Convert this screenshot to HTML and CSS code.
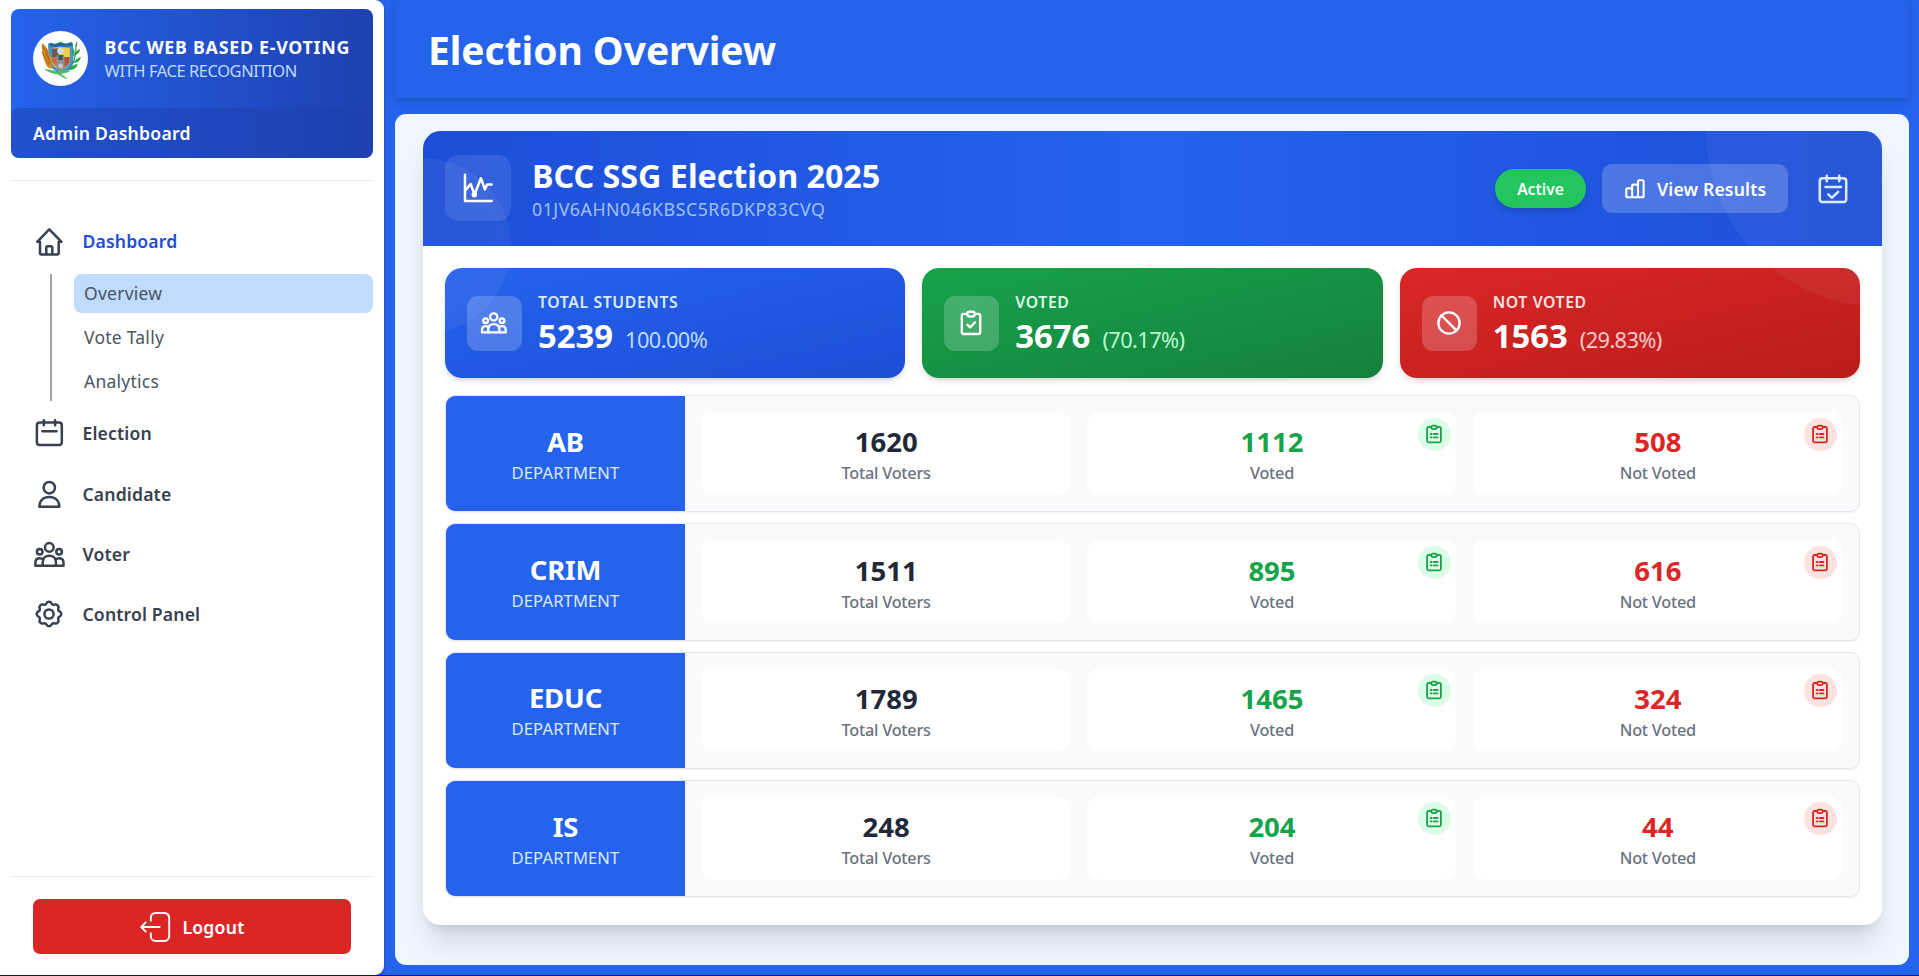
FILE: index.html
```html
<!DOCTYPE html>
<html lang="en">
<head>
<meta charset="utf-8">
<title>Election Overview</title>
<link rel="stylesheet" href="styles.css">
</head>
<body>
<svg class="sprite" aria-hidden="true">
  <symbol id="i-home" viewBox="0 0 32 32"><path d="M7 16.8H4.2L16.3 4.4 28.5 16.8h-2.8V28a1.4 1.4 0 0 1-1.4 1.4H8.4A1.4 1.4 0 0 1 7 28z"/><path d="M13.3 29v-6.3a1.5 1.5 0 0 1 1.5-1.5h3a1.5 1.5 0 0 1 1.5 1.5V29"/></symbol>
  <symbol id="i-calendar" viewBox="0 0 32 32"><rect x="3.9" y="5.6" width="24.9" height="22.4" rx="2.8"/><path d="M10.8 3.2v5M22.1 3.2v5M9.4 14.2h14.2"/></symbol>
  <symbol id="i-user" viewBox="0 0 32 32"><circle cx="16.3" cy="9.7" r="5.7"/><path d="M6.4 28.7C6.4 22.4 10.6 18.9 16.3 18.9s10 3.5 10 9.8z"/></symbol>
  <symbol id="i-users" viewBox="0 0 32 32"><circle cx="16.3" cy="9.4" r="4.3"/><circle cx="6.7" cy="13.8" r="2.8"/><circle cx="26.1" cy="13.8" r="2.8"/><path d="M9.7 27.8V24.5c0-4.4 2.8-6.7 6.6-6.7s6.7 2.3 6.7 6.7v3.3z"/><path d="M9.7 27.8H2.4v-2.9c0-3 1.6-4.6 4.3-4.6 1.5 0 2.7.5 3.5 1.5M23 27.8h7.5v-2.9c0-3-1.7-4.6-4.4-4.6-1.5 0-2.7.5-3.5 1.5"/></symbol>
  <symbol id="i-gear" viewBox="0 0 32 32"><circle cx="16" cy="16" r="4.6"/><path d="M13.36 5.42A2.9 2.9 0 0 1 18.64 5.42A2.2 2.2 0 0 0 21.61 6.66A2.9 2.9 0 0 1 25.34 10.39A2.2 2.2 0 0 0 26.58 13.36A2.9 2.9 0 0 1 26.58 18.64A2.2 2.2 0 0 0 25.34 21.61A2.9 2.9 0 0 1 21.61 25.34A2.2 2.2 0 0 0 18.64 26.58A2.9 2.9 0 0 1 13.36 26.58A2.2 2.2 0 0 0 10.39 25.34A2.9 2.9 0 0 1 6.66 21.61A2.2 2.2 0 0 0 5.42 18.64A2.9 2.9 0 0 1 5.42 13.36A2.2 2.2 0 0 0 6.66 10.39A2.9 2.9 0 0 1 10.39 6.66A2.2 2.2 0 0 0 13.36 5.42z"/></symbol>
  <symbol id="i-logout" viewBox="0 0 32 32"><path d="M11.8 9.8V7.5C11.8 3 13.5 2 17 2h8c3.5 0 5.2 1.5 5.2 5.5v17c0 4-1.7 5.5-5.2 5.5h-8c-3.5 0-5.2-1-5.2-5.5v-2.3M20.6 16H2.2M6.8 11.4L2.2 16l4.6 4.6"/></symbol>
  <symbol id="i-chart" viewBox="0 0 32 32"><path d="M3 2.8v26.2h26.600M3.600 18.200l5-6.200 4 10.500 6.300-16.300 4 11.200 2.200-4.900h4.500"/><circle cx="12.300" cy="22.800" r="1.500"/></symbol>
  <symbol id="i-bars" viewBox="0 0 24 24"><path d="M8.900 21H3.700a1.200 1.200 0 0 1-1.200-1.200v-7.300a1.200 1.200 0 0 1 1.200-1.200h5.200zM15.300 21H8.900V8.500a1.300 1.300 0 0 1 1.300-1.300h5.100zM15.300 21V3.800a1.300 1.300 0 0 1 1.300-1.300h3.500a1.300 1.300 0 0 1 1.300 1.300v16a1.200 1.200 0 0 1-1.200 1.200z"/></symbol>
  <symbol id="i-calcheck" viewBox="0 0 32 32"><rect x="2.800" y="5.200" width="26.400" height="23.800" rx="2.800"/><path d="M9.800 2.800v5.400M22.200 2.800v5.400M8.500 14h15.500M11.300 21.400l3.600 3.400 6.200-6"/></symbol>
  <symbol id="i-clipcheck" viewBox="0 0 24 24"><rect x="8.600" y="1.600" width="6.800" height="4.400" rx="2"/><path d="M8.600 3.600H5.200A1.700 1.700 0 0 0 3.500 5.300v15.200a1.700 1.700 0 0 0 1.700 1.700h13.600a1.700 1.700 0 0 0 1.700-1.700V5.300a1.700 1.700 0 0 0-1.700-1.700h-3.400M8.700 13.600l2.500 2.500 4.500-4.800"/></symbol>
  <symbol id="i-ban" viewBox="0 0 24 24"><circle cx="12" cy="12" r="9.800"/><path d="M5 5l14 14"/></symbol>
  <symbol id="i-cliplist" viewBox="0 0 20 20"><rect x="7.200" y="1.700" width="5.600" height="3.500" rx="1.700"/><path d="M7.200 3H4.600A1.500 1.500 0 0 0 3.100 4.500v12.300a1.500 1.500 0 0 0 1.500 1.500h10.800a1.500 1.500 0 0 0 1.500-1.500V4.500A1.500 1.500 0 0 0 15.400 3h-2.600M6.600 10h1M9.800 10h3.700M6.600 13.400h1M9.800 13.400h3.700"/></symbol>
</svg>

<div class="app">
  <aside class="sidebar">
    <div class="brand">
      <div class="brand-top">
        <svg class="logo" viewBox="0 0 55 55">
          <circle cx="27.500" cy="27.500" r="27.500" fill="#fff"/>
          <path d="M15 12q6 3 12.500-1Q34 15 40 11.500l.5 18Q39 39 27.500 43 17 39 15.500 29z" fill="#3f9ad0"/>
          <path d="M17 11.500q5 2.500 10.500-.5 5.500 3 11-.2l1 3.600q-6 2.600-12 .6-6 2-11 0z" fill="#236b99"/>
          <path d="M19 17q8-2 17.500 0l.5 13q-1.500 6-9.500 9.500-8-3.500-9-9.500z" fill="#e8c54b"/>
          <path d="M18.800 17.500h7v9h-7z" fill="#675b66"/><path d="M29 17.500h7.500v9H29z" fill="#f0ce45"/><path d="M18.800 26.500h7.500V37q-6-3-7.300-7z" fill="#d8643d"/><path d="M28.500 26h8v5q-2 4-8 7z" fill="#b45235"/>
          <circle cx="27.500" cy="20" r="3.200" fill="#d7dde1"/><path d="M24 24h7l1 10-2.500 7h-4L23 34z" fill="#8c8e92"/><path d="M25.500 24h4v5h-4z" fill="#315b4c"/><circle cx="27.500" cy="35" r="2.400" fill="#c7c9cb"/>
          <path d="M9 12q8 5 10.500 25-4 2-6.500-3.500Q8 23 9 12z" fill="#d68b25"/><path d="M9.500 15l7 15M9 21l7 13M13 17l4 15" stroke="#a9651b" fill="none"/>
          <path d="M44 10q-2 3-1.500 6Q45 14 44 10zm3 8q-4 1-5 6 5-1 5-6zm1 8q-5 1-7.500 6 6 0 7.500-6zm-3 7q-6 0-9 6 7 0 9-6zm-5-16q-2 5 1 9 2-5-1-9z" fill="#2eaa45"/><path d="M43 14q1 17-9 27" stroke="#187c38" fill="none"/>
          <path d="M11 38q7 0 13 3 7-3 14-1-5 2-10 3l7 5-3-.5-7-4q-8-1-14-5.500z" fill="#4fbd5d"/>
        </svg>
        <div class="brand-text">
          <div class="brand-name">BCC WEB BASED E-VOTING</div>
          <div class="brand-sub">WITH FACE RECOGNITION</div>
        </div>
      </div>
      <div class="brand-role"><span>Admin Dashboard</span></div>
    </div>
    <div class="rule"></div>
    <nav class="nav">
      <a class="nav-item active"><svg class="nav-icon"><use href="#i-home"/></svg><span>Dashboard</span></a>
      <div class="subnav">
        <a class="sub selected"><span>Overview</span></a>
        <a class="sub"><span>Vote Tally</span></a>
        <a class="sub"><span>Analytics</span></a>
      </div>
      <a class="nav-item"><svg class="nav-icon"><use href="#i-calendar"/></svg><span>Election</span></a>
      <a class="nav-item"><svg class="nav-icon"><use href="#i-user"/></svg><span>Candidate</span></a>
      <a class="nav-item"><svg class="nav-icon"><use href="#i-users"/></svg><span>Voter</span></a>
      <a class="nav-item"><svg class="nav-icon"><use href="#i-gear"/></svg><span>Control Panel</span></a>
    </nav>
    <div class="side-foot">
      <button class="logout"><svg class="logout-icon"><use href="#i-logout"/></svg><span>Logout</span></button>
    </div>
  </aside>

  <main class="main">
    <header class="page-head"><h1>Election Overview</h1></header>
    <section class="content">
      <article class="card">
        <div class="orb orb-right"></div>
        <div class="orb orb-left"></div>
        <div class="card-head">
          <div class="head-icon"><svg><use href="#i-chart"/></svg></div>
          <div class="head-text">
            <h2>BCC SSG Election 2025</h2>
            <p>01JV6AHN046KBSC5R6DKP83CVQ</p>
          </div>
          <span class="pill"><span>Active</span></span>
          <button class="view"><svg><use href="#i-bars"/></svg><span>View Results</span></button>
          <svg class="cal"><use href="#i-calcheck"/></svg>
        </div>
        <div class="card-body">
          <div class="stats">
            <div class="stat blue"><div class="stat-icon"><svg class="people"><use href="#i-users"/></svg></div><div class="stat-text"><div class="stat-label">TOTAL STUDENTS</div><div class="stat-line"><b>5239</b><span>100.00%</span></div></div></div>
            <div class="stat green"><div class="stat-icon"><svg><use href="#i-clipcheck"/></svg></div><div class="stat-text"><div class="stat-label">VOTED</div><div class="stat-line"><b>3676</b><span>(70.17%)</span></div></div></div>
            <div class="stat red"><div class="stat-icon"><svg><use href="#i-ban"/></svg></div><div class="stat-text"><div class="stat-label">NOT VOTED</div><div class="stat-line"><b>1563</b><span>(29.83%)</span></div></div></div>
          </div>
          <div class="rows">
            <div class="row">
              <div class="dept"><b>AB</b><span>DEPARTMENT</span></div>
              <div class="cells">
                <div class="cell"><b>1620</b><span>Total Voters</span></div>
                <div class="cell voted"><b>1112</b><span>Voted</span><i class="badge"><svg><use href="#i-cliplist"/></svg></i></div>
                <div class="cell missed"><b>508</b><span>Not Voted</span><i class="badge"><svg><use href="#i-cliplist"/></svg></i></div>
              </div>
            </div>
            <div class="row">
              <div class="dept"><b>CRIM</b><span>DEPARTMENT</span></div>
              <div class="cells">
                <div class="cell"><b>1511</b><span>Total Voters</span></div>
                <div class="cell voted"><b>895</b><span>Voted</span><i class="badge"><svg><use href="#i-cliplist"/></svg></i></div>
                <div class="cell missed"><b>616</b><span>Not Voted</span><i class="badge"><svg><use href="#i-cliplist"/></svg></i></div>
              </div>
            </div>
            <div class="row">
              <div class="dept"><b>EDUC</b><span>DEPARTMENT</span></div>
              <div class="cells">
                <div class="cell"><b>1789</b><span>Total Voters</span></div>
                <div class="cell voted"><b>1465</b><span>Voted</span><i class="badge"><svg><use href="#i-cliplist"/></svg></i></div>
                <div class="cell missed"><b>324</b><span>Not Voted</span><i class="badge"><svg><use href="#i-cliplist"/></svg></i></div>
              </div>
            </div>
            <div class="row">
              <div class="dept"><b>IS</b><span>DEPARTMENT</span></div>
              <div class="cells">
                <div class="cell"><b>248</b><span>Total Voters</span></div>
                <div class="cell voted"><b>204</b><span>Voted</span><i class="badge"><svg><use href="#i-cliplist"/></svg></i></div>
                <div class="cell missed"><b>44</b><span>Not Voted</span><i class="badge"><svg><use href="#i-cliplist"/></svg></i></div>
              </div>
            </div>
          </div>
        </div>
      </article>
    </section>
  </main>
</div>
</body>
</html>
```
FILE: styles.css
```css
* { box-sizing: border-box; margin: 0; padding: 0; }
html { background: #1b2333; }
body {
  font-family: "Noto Sans", "Open Sans", sans-serif;
  color: #374151;
  height: 976px;
  overflow: hidden;
}
svg { fill: none; stroke: currentColor; stroke-width: 2.5; stroke-linecap: round; stroke-linejoin: round; display: block; flex: none; }
.logo path, .logo circle { stroke-width: 0; }
.logo path[fill="none"] { stroke-width: 1; }
.sprite { position: absolute; width: 0; height: 0; }
button { border: 0; font: inherit; color: inherit; }
span, b, h1, h2, p { white-space: nowrap; }

.app { display: flex; height: 975px; background: #2563eb; }

/* Sidebar */
.sidebar {
  width: 384px;
  flex: none;
  display: flex;
  flex-direction: column;
  padding: 9px 11px 0;
  background: #fff;
  border-radius: 0 9px 9px 0;
  box-shadow: 0 1px 3px rgba(0, 0, 0, .3);
}
.brand {
  height: 149px;
  flex: none;
  border-radius: 8px;
  background: linear-gradient(to right, #2563eb, #1e40af);
  color: #fff;
}
.brand-top { display: flex; height: 99px; padding: 0 22px; align-items: center; gap: 16.5px; }
.logo { width: 55px; height: 55px; }
.brand-text { white-space: nowrap; }
.brand-name { font-size: 17.8px; font-weight: 700; line-height: 24px; letter-spacing: .75px; }
.brand-sub { font-size: 16.5px; line-height: 23px; letter-spacing: -.45px; color: #bfdbfe; }
.brand-role {
  display: flex;
  align-items: center;
  height: 50px;
  padding-left: 22px;
  border-radius: 8px;
  background: rgba(30, 64, 175, .5);
  font-size: 17.6px;
  font-weight: 600;
  letter-spacing: .25px;
}
.rule { height: 1px; flex: none; margin-top: 22px; background: #e5e7eb; }
.nav { padding-top: 30px; }
.nav-item {
  display: flex;
  align-items: center;
  height: 60.4px;
  padding-left: 22px;
  gap: 17.5px;
  font-size: 17.6px;
  font-weight: 600;
  letter-spacing: .15px;
}
.nav-item.active { height: 60px; margin-bottom: 3px; color: #1d4ed8; }
.nav-icon { width: 32px; height: 32px; color: #374151; }
.subnav {
  display: grid;
  gap: 5px;
  margin: 0 0 2px 39px;
  border-left: 2px solid #9ca3af;
  padding-left: 22px;
}
.sub { display: flex; align-items: center; height: 39px; padding: 0 0 1px 10px; border-radius: 8px; font-size: 17.5px; letter-spacing: .25px; color: #4b5563; }
.sub.selected { background: #bfdbfe; }
.side-foot { margin-top: auto; height: 99px; border-top: 1px solid #e5e7eb; padding: 22px 22px 0; }
.logout {
  display: flex;
  width: 318px;
  height: 55px;
  align-items: center;
  justify-content: center;
  gap: 11px;
  border-radius: 7px;
  background: #dc2626;
  color: #fff;
  font-size: 17.6px;
  font-weight: 600;
  letter-spacing: .25px;
}
.logout-icon { width: 32px; height: 32px; stroke-width: 1.9; }

/* Main area */
.main { flex: 1; display: flex; flex-direction: column; padding: 0 10px 10px 11px; }
.page-head { height: 98px; flex: none; padding-left: 33px; box-shadow: 0 4px 7px rgba(0, 0, 0, .14); }
h1 { font-size: 39px; line-height: 100px; letter-spacing: -.05px; color: #fff; }
.content { flex: 1; margin-top: 16px; padding: 17px 27px 0 28px; border-radius: 11px; background: #eff6ff; overflow: hidden; }

.card {
  position: relative;
  height: 794px;
  border-radius: 17.6px;
  background: #fff;
  overflow: hidden;
  box-shadow: 0 22px 28px -5px rgba(0, 0, 0, .12), 0 8px 11px -6px rgba(0, 0, 0, .12);
}
.orb { position: absolute; z-index: 2; border-radius: 50%; background: rgba(255, 255, 255, .05); pointer-events: none; }
.orb-right { width: 352px; height: 352px; top: -176px; right: -176px; }
.orb-left { width: 176px; height: 176px; top: 27px; left: -88px; }

.card-head {
  display: flex;
  align-items: center;
  height: 115px;
  padding: 0 33px 0 22px;
  background: linear-gradient(to right, #1d4ed8, #2563eb, #1d4ed8);
  color: #fff;
}
.head-icon { display: grid; place-items: center; width: 66px; height: 66px; margin-bottom: 1px; border-radius: 13px; background: rgba(255, 255, 255, .1); }
.head-icon svg { width: 32px; height: 32px; margin: 0 1px 1px 0; }
.head-text { flex: 1; padding: 3px 0 0 21px; }
h2 { font-size: 32.3px; line-height: 39px; letter-spacing: -.03px; }
.head-text p { font-size: 17.8px; line-height: 29px; letter-spacing: .5px; color: #bfdbfe; opacity: .8; }
.pill {
  display: grid;
  place-items: center;
  width: 91px;
  height: 39px;
  border-radius: 20px;
  background: #22c55e;
  font-size: 15.6px;
  font-weight: 600;
  letter-spacing: 0;
  box-shadow: 0 4px 7px -1px rgba(0, 0, 0, .15);
}
.view {
  display: flex;
  align-items: center;
  width: 186px;
  height: 49px;
  margin-left: 16px;
  padding-left: 22px;
  gap: 11px;
  border-radius: 10px;
  background: rgba(255, 255, 255, .2);
  font-size: 17.6px;
  font-weight: 600;
  letter-spacing: .15px;
}
.view svg { width: 22px; height: 22px; stroke-width: 2.3; }
.cal { width: 32px; height: 32px; margin-left: 29px; color: #dbeafe; }

.card-body { padding: 22px; }
.stats { display: grid; grid-template-columns: repeat(3, 1fr); gap: 17px; }
.stat {
  display: flex;
  align-items: center;
  height: 110px;
  padding-left: 22px;
  gap: 16px;
  border-radius: 17px;
  color: #fff;
  box-shadow: 0 4px 7px -1px rgba(0, 0, 0, .12), 0 2px 4px -2px rgba(0, 0, 0, .12);
}
.blue { background: linear-gradient(to bottom right, #2563eb, #1d4ed8); --soft: #bfdbfe; --label: #dbeafe; }
.green { background: linear-gradient(to bottom right, #16a34a, #15803d); --soft: #bbf7d0; --label: #dcfce7; }
.red { background: linear-gradient(to bottom right, #dc2626, #b91c1c); --soft: #fecaca; --label: #fee2e2; }
.stat-icon { display: grid; place-items: center; width: 55px; height: 55px; border-radius: 11px; background: rgba(255, 255, 255, .2); }
.stat-icon svg { width: 26px; height: 26px; margin: 0 1px 1px 0; stroke-width: 2.2; }
.stat-icon .people { width: 27px; height: 27px; margin-right: 2px; stroke-width: 2.7; }
.stat-text { padding-top: 6px; }
.stat-label { font-size: 15.8px; font-weight: 600; line-height: 24px; letter-spacing: .6px; color: var(--label); }
.stat-line { display: flex; align-items: baseline; gap: 12px; line-height: 44px; }
.stat-line b { font-size: 32.8px; }
.stat-line span { font-size: 21.8px; font-weight: 400; letter-spacing: -.6px; color: var(--soft); }

/* Department rows */
.rows { display: grid; gap: 11px; margin-top: 17px; }
.row {
  display: flex;
  height: 117.33px;
  border: 1px solid #e5e7eb;
  border-radius: 10px;
  background: #f9fafb;
  overflow: hidden;
  box-shadow: 0 1px 2px rgba(0, 0, 0, .06);
}
.dept, .cell { display: flex; flex-direction: column; align-items: center; justify-content: center; padding-top: 4px; }
.dept { width: 239px; background: #2563eb; color: #fff; }
.dept b, .cell b { font-size: 27.5px; line-height: 34px; }
.dept b { letter-spacing: -.2px; }
.dept span { font-size: 16.6px; line-height: 28px; letter-spacing: .1px; color: #dbeafe; }
.cells { flex: 1; display: grid; grid-template-columns: repeat(3, 1fr); gap: 16.5px; padding: 16px 17px 16.5px 16px; }
.cell { position: relative; padding: 6px 0 0 1px; border-radius: 11px; background: #fff; }
.cell b { color: #1f2937; }
.cell span { font-size: 16.3px; font-weight: 500; line-height: 28px; letter-spacing: -.25px; color: #6b7280; }
.cell.voted b, .voted .badge { color: #16a34a; }
.cell.missed b, .missed .badge { color: #dc2626; }
.badge { position: absolute; top: 5.5px; right: 5.5px; display: grid; place-items: center; width: 33px; height: 33px; border-radius: 50%; }
.badge svg { width: 20px; height: 20px; margin: 0 1px 1px 0; stroke-width: 1.8; }
.voted .badge { background: #dcfce7; }
.missed .badge { background: #fee2e2; }
```
